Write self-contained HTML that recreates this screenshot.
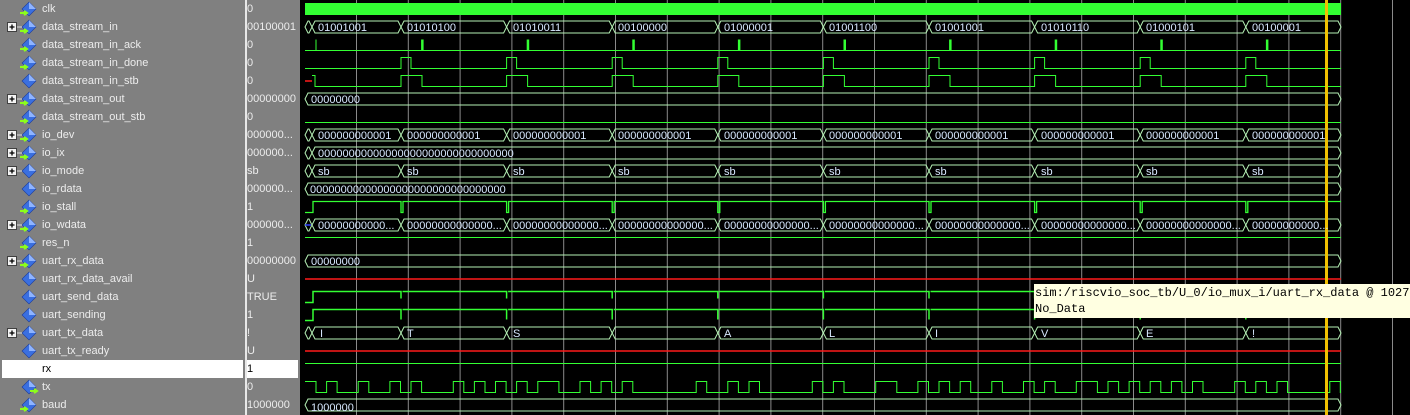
<!DOCTYPE html>
<html><head><meta charset="utf-8"><style>
body{margin:0;width:1410px;height:415px;overflow:hidden;background:#000;font-family:"Liberation Sans",sans-serif;position:relative}
#names{position:absolute;left:0;top:0;width:245px;height:415px;background:#808080}
#vals{position:absolute;left:247px;top:0;width:53px;height:415px;background:#808080}
#sep{position:absolute;left:245px;top:0;width:2px;height:415px;background:#e8e8e8}
.r{position:absolute;height:18px;line-height:18px;font-size:11px;color:#ececec;white-space:nowrap}
.n{left:42px}
.v{left:0}
.hl{background:#fff;color:#000}
svg{position:absolute;left:0;top:0}
#tip{position:absolute;left:1034px;top:284px;width:380px;height:34px;background:#ffffe1;font-family:"Liberation Mono",monospace;font-size:12px;color:#000;line-height:16px;padding:1px 0 0 1px;box-sizing:border-box;white-space:nowrap}
</style></head><body>
<div id="names"></div><div id="sep"></div><div id="vals"></div>
<svg id="w" width="1410" height="415"></svg>
<div id="tip">sim:/riscvio_soc_tb/U_0/io_mux_i/uart_rx_data @ 102706<br>No_Data</div>
<div style="position:absolute;left:0;top:0">
<div class="r n" style="top:0">clk</div><div class="r n" style="top:18px">data_stream_in</div><div class="r n" style="top:36px">data_stream_in_ack</div><div class="r n" style="top:54px">data_stream_in_done</div><div class="r n" style="top:72px">data_stream_in_stb</div><div class="r n" style="top:90px">data_stream_out</div><div class="r n" style="top:108px">data_stream_out_stb</div><div class="r n" style="top:126px">io_dev</div><div class="r n" style="top:144px">io_ix</div><div class="r n" style="top:162px">io_mode</div><div class="r n" style="top:180px">io_rdata</div><div class="r n" style="top:198px">io_stall</div><div class="r n" style="top:216px">io_wdata</div><div class="r n" style="top:234px">res_n</div><div class="r n" style="top:252px">uart_rx_data</div><div class="r n" style="top:270px">uart_rx_data_avail</div><div class="r n" style="top:288px">uart_send_data</div><div class="r n" style="top:306px">uart_sending</div><div class="r n" style="top:324px">uart_tx_data</div><div class="r n" style="top:342px">uart_tx_ready</div><div class="r hl" style="top:360px;left:2px;width:241px;padding-left:40px;box-sizing:border-box">rx</div><div class="r n" style="top:378px">tx</div><div class="r n" style="top:396px">baud</div>
</div>
<div style="position:absolute;left:247px;top:0">
<div class="r v" style="top:0">0</div><div class="r v" style="top:18px">00100001</div><div class="r v" style="top:36px">0</div><div class="r v" style="top:54px">0</div><div class="r v" style="top:72px">0</div><div class="r v" style="top:90px">00000000</div><div class="r v" style="top:108px">0</div><div class="r v" style="top:126px">000000...</div><div class="r v" style="top:144px">000000...</div><div class="r v" style="top:162px">sb</div><div class="r v" style="top:180px">000000...</div><div class="r v" style="top:198px">1</div><div class="r v" style="top:216px">000000...</div><div class="r v" style="top:234px">1</div><div class="r v" style="top:252px">00000000</div><div class="r v" style="top:270px">U</div><div class="r v" style="top:288px">TRUE</div><div class="r v" style="top:306px">1</div><div class="r v" style="top:324px">!</div><div class="r v" style="top:342px">U</div><div class="r v hl" style="top:360px;width:51px">1</div><div class="r v" style="top:378px">0</div><div class="r v" style="top:396px">1000000</div>
</div>
<svg width="1410" height="415" style="pointer-events:none">
<g font-family="Liberation Sans, sans-serif" font-size="11" fill="#d8e8ff">
<text x="318" y="31">01001001</text><text x="407" y="31">01010100</text><text x="513" y="31">01010011</text><text x="618" y="31">00100000</text><text x="724" y="31">01000001</text><text x="829" y="31">01001100</text><text x="935" y="31">01001001</text><text x="1041" y="31">01010110</text><text x="1146" y="31">01000101</text><text x="1252" y="31">00100001</text>
<text x="311" y="103">00000000</text>
<text x="318" y="139">000000000001</text><text x="407" y="139">000000000001</text><text x="513" y="139">000000000001</text><text x="618" y="139">000000000001</text><text x="724" y="139">000000000001</text><text x="829" y="139">000000000001</text><text x="935" y="139">000000000001</text><text x="1041" y="139">000000000001</text><text x="1146" y="139">000000000001</text><text x="1252" y="139">000000000001</text>
<text x="318" y="157">00000000000000000000000000000000</text>
<text x="318" y="175">sb</text><text x="407" y="175">sb</text><text x="513" y="175">sb</text><text x="618" y="175">sb</text><text x="724" y="175">sb</text><text x="829" y="175">sb</text><text x="935" y="175">sb</text><text x="1041" y="175">sb</text><text x="1146" y="175">sb</text><text x="1252" y="175">sb</text>
<text x="310" y="193">00000000000000000000000000000000</text>
<text x="318" y="229">00000000000...</text><text x="407" y="229">00000000000000...</text><text x="513" y="229">00000000000000...</text><text x="618" y="229">00000000000000...</text><text x="724" y="229">00000000000000...</text><text x="829" y="229">00000000000000...</text><text x="935" y="229">00000000000000...</text><text x="1041" y="229">00000000000000...</text><text x="1146" y="229">00000000000000...</text><text x="1252" y="229">00000000000...</text>
<text x="311" y="265">00000000</text>
<text x="320" y="337">I</text><text x="407" y="337">T</text><text x="513" y="337">S</text><text x="724" y="337">A</text><text x="829" y="337">L</text><text x="935" y="337">I</text><text x="1041" y="337">V</text><text x="1146" y="337">E</text><text x="1252" y="337">!</text>
<text x="311" y="411">1000000</text>
</g></svg>
<script>
var s=document.getElementById('w'),h='';
function L(d,c,w){h+='<path d="'+d+'" stroke="'+c+'" stroke-width="'+(w||1)+'" fill="none"/>';}
var G='#33ff33',B='#b4f0b4',R='#ff1a1a',E=1341,P=105.6,T=[];
for(var k=0;k<10;k++)T.push(k==0?312:401+P*(k-1));
for(var x=356.5;x<1410;x+=51.8)L('M'+x+',0V415','#8a8a8a');
var ic='';
for(var r=0;r<23;r++){var y=r*18;
 ic+='<path d="M29,'+(y+2)+'L36,'+(y+9)+'L29,'+(y+16)+'L22,'+(y+9)+'Z" fill="#3a6fe0" stroke="#1c3c9a" stroke-width="0.6"/><path d="M29,'+(y+2)+'L36,'+(y+9)+'L29,'+(y+9)+'Z" fill="#8fb4ff"/>';
 if([0,1,2,3,5,6,7,8,11,12,13,14,20,22].indexOf(r)>=0)ic+='<path d="M20,'+(y+13)+'h6M24,'+(y+11)+'l3,2l-3,2" stroke="#8cff1a" stroke-width="2" fill="none"/>';
 if(r==21)ic+='<path d="M30,'+(y+13)+'h6M34,'+(y+11)+'l3,2l-3,2" stroke="#8cff1a" stroke-width="2" fill="none"/>';
 if([1,5,7,8,9,12,14,18].indexOf(r)>=0)ic+='<rect x="7.5" y="'+(y+4.5)+'" width="9" height="9" fill="#f4f4f4" stroke="#404040"/><path d="M9.5,'+(y+9)+'h5M12,'+(y+6.5)+'v5" stroke="#000" stroke-width="1.3"/><path d="M17,'+(y+9)+'h5" stroke="#ddd"/>';
}
h+=ic;
function busSeg(r,a,b){var t=r*18+3,bt=r*18+15,m=r*18+9;L('M'+a+','+m+'L'+(a+3)+','+t+'H'+(b-3)+'L'+b+','+m+'L'+(b-3)+','+bt+'H'+(a+3)+'Z',B);}
function busR(r,segs){var xs=[305].concat(segs?T:[]);xs.push(E);if(!segs){busSeg(r,305,E);return;}for(var i=0;i<xs.length-1;i++)busSeg(r,xs[i],xs[i+1]);}
h+='<rect x="305" y="3" width="1036" height="12" fill="'+G+'"/>';
busR(1,1);busR(5,0);busR(7,1);busR(9,1);busR(10,0);busR(12,1);busR(14,0);busR(18,1);busR(22,0);
busSeg(8,305,312);busSeg(8,312,E);
function lo(r){return r*18+14.5}function hi(r){return r*18+3.5}
var d='M305,'+lo(2);for(var k=0;k<10;k++){var x=316+P*k;d+='H'+x+'V'+hi(2)+'V'+lo(2);}L(d+'H'+E,G);
for(var k=1;k<10;k++)h+='<rect x="'+(316+P*k)+'" y="'+hi(2)+'" width="2" height="11" fill="'+G+'"/>';
d='M305,'+lo(3);for(var k=1;k<10;k++){var x=T[k];d+='H'+x+'V'+hi(3)+'H'+(x+10)+'V'+lo(3);}L(d+'H'+E,G);
L('M305,'+(4*18+9)+'H312',R,1.5);
d='M312,'+hi(4)+'H315V'+lo(4);for(var k=1;k<10;k++){var x=T[k];d+='H'+x+'V'+hi(4)+'H'+(x+21)+'V'+lo(4);}L(d+'H'+E,G);
L('M305,'+lo(6)+'H'+E,G);
d='M305,'+lo(11)+'H313V'+hi(11);for(var k=1;k<10;k++){d+='H'+T[k]+'V'+lo(11)+'h2V'+hi(11);}L(d+'H'+E,G,1.3);
L('M305,'+(12*18+9)+'H311','#3040ff',1.5);
L('M305,'+hi(13)+'H'+E,G);
L('M305,'+(15*18+9)+'H'+E,R,1.5);L('M305,'+(19*18+9)+'H'+E,R,1.5);
for(var r of[16,17]){d='M305,'+lo(r)+'H313V'+hi(r);for(var k=1;k<10;k++){d+='H'+T[k]+'v'+(r==17?10:7)+'M'+(T[k]+1.5)+','+hi(r);}L(d+'H'+E,G,1.5);}
L('M305,'+hi(20)+'H'+E,G);
var str="ITS ALIVE!",bw=P/10;d='M305,'+hi(21);var cur=1;
for(var k=0;k<10;k++){var c=str.charCodeAt(k),bits=[0];for(var b=0;b<8;b++)bits.push((c>>b)&1);bits.push(1);
 for(var b=0;b<10;b++){var x=316+P*k+bw*b;if(x>E)break;if(bits[b]!=cur){d+='H'+x.toFixed(1)+'V'+(bits[b]?hi(21):lo(21));cur=bits[b];}}}
L(d+'H'+E,G);
h+='<rect x="1325" y="0" width="3" height="415" fill="#f0c000"/>';
s.innerHTML=h;
</script>
</body></html>
